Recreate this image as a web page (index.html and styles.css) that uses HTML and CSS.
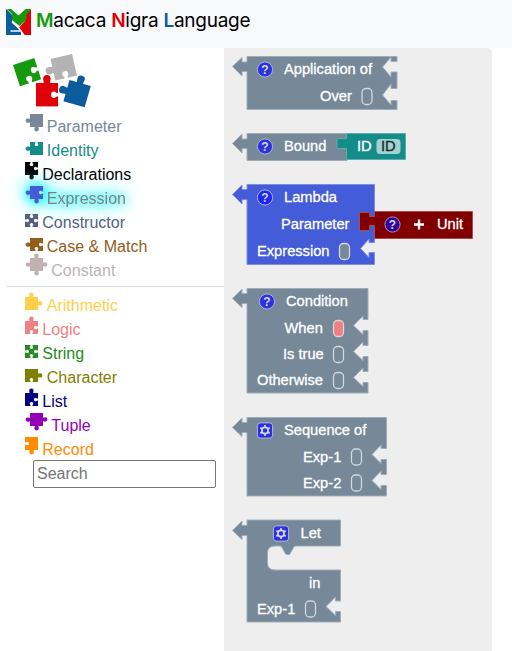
FILE: index.html
```html
<!DOCTYPE html>
<html lang="en">
<head>
<meta charset="utf-8">
<title>Macaca Nigra Language</title>
<link rel="stylesheet" href="styles.css">
</head>
<body>
<svg class="defs" aria-hidden="true">
  <defs>
    <path id="knob" d="M4.500 .5V-.5C4.500-1.100 4.200-1.300 4.200-2.400A2.200 2 0 0 1 8.600-2.400C8.600-1.300 8.300-1.100 8.300-.5V.5Z"/>
    <path id="hole" d="M5.500-.3V.7C5.500 1.300 4.700 1.500 4.700 2.400A1.800 1.700 0 0 0 8.300 2.400C8.300 1.500 7.500 1.300 7.500.7V-.3Z"/>
    <g id="help"><circle r="7.6"/><text y="4.2" text-anchor="middle">?</text></g>
    <g id="gear"><rect x="-7.6" y="-7.6" width="15.2" height="15.2" rx="3"/><circle r="3.1"/><path d="M0-5.400V-3.500M0 3.500V5.400M-4.700-2.700L-3-1.700M3 1.700L4.700 2.700M-4.700 2.700L-3 1.700M3-1.700L4.700-2.700"/></g>
    <rect id="slot" x="-5" y="-8" width="10" height="16" rx="4"/>
  </defs>
</svg>
<header class="topbar">
  <svg class="logo" viewBox="0 0 25 26">
    <path fill="#0a5c9c" d="M0 0L6 6V13.500L15 22.500V26H0Z"/>
    <path fill="#e00007" d="M25 0V26H18.500L13 18.500L19 12V6.500Z"/>
    <path fill="#149a0c" d="M5 0L12.500 6.500L19.500 0H25L20.500 6L20 11L13.500 17L6 11V5L1 0Z"/>
    <path fill="#0a5c9c" d="M0 0L6 6V14H0Z"/>
    <path stroke="#f8f9fb" stroke-width="1.500" fill="none" d="M6 13L12 18L18 26.500M4.500 22H14"/>
  </svg>
  <h1><b class="m">M</b>acaca <b class="n">N</b>igra <b class="l">L</b>anguage</h1>
</header>
<main>
  <aside>
    <svg class="pieces" viewBox="0 0 80 56">
      <g fill="#149a0c" transform="translate(0 11) rotate(-18) scale(1.720)"><rect width="13" height="13"/><use href="#hole" fill="#fff" transform="translate(13 0) rotate(90)"/><use href="#hole" fill="#fff" transform="translate(13 13) rotate(180)"/></g>
      <g fill="#b3b3b3" transform="translate(37.500 5) rotate(-13) scale(1.700)"><rect width="13" height="13"/><use href="#knob" transform="translate(0 13) rotate(-90)"/><use href="#hole" fill="#fff" transform="translate(13 13) rotate(180)"/></g>
      <g fill="#e00007" transform="translate(23 29) scale(1.700 1.800)"><rect width="13" height="13"/><use href="#knob"/><use href="#hole" fill="#fff" transform="translate(13 0) rotate(90)"/></g>
      <g fill="#0a5c9c" transform="translate(56.500 26) rotate(16) scale(1.700)"><rect width="13" height="13"/><use href="#knob"/><use href="#knob" transform="translate(0 13) rotate(-90)"/></g>
    </svg>
    <nav id="categories"></nav>
    <input type="text" placeholder="Search">
  </aside>
  <section class="flyout">
    <svg viewBox="224 48 268 603" width="268" height="603">
      <g class="block gray">
        <path d="M247 56.500H397V61.500H391V57L382.500 67L391 77V72H397V88.500H391V84L382.500 95L391 105V100.500H397V109.500H247V71.500H242V76L232.500 66.500L242 57.500V62H247Z"/>
        <use href="#help" class="icon" x="265" y="69.500"/>
        <text x="284" y="74.500">Application of</text><text x="320" y="101.500">Over</text>
        <use href="#slot" class="slot" x="367" y="96.500"/>
      </g>
      <g class="block gray">
        <path d="M247 133.500H347V160.500H247V148.500H242V153L232.500 143.500L242 134V139H247Z"/>
        <use href="#help" class="icon" x="265" y="146.500"/><text x="284" y="151.500">Bound</text>
      </g>
      <g class="block teal">
        <path d="M346.500 133.500H405.500V159.500H346.500V148.500H337V138.500H346.500Z"/>
        <text x="357" y="151.500">ID</text><rect class="field" x="376.500" y="139" width="24" height="15" rx="3.500"/><text class="dark" x="381" y="151.500">ID</text>
      </g>
      <g class="block blue">
        <path d="M247 184.500H374.500V242.500H369V239L360.500 248.500L369 257.500V252.500H374.500V264.500H247V199.500H242V204L232.500 194.500L242 185V189.500H247Z"/>
        <use href="#help" class="icon bright" x="265" y="197.500"/>
        <text x="284" y="202.500">Lambda</text><text x="281" y="229.500">Parameter</text><text x="257" y="256.500">Expression</text>
        <use href="#slot" class="slot filled" x="344.500" y="251.500"/>
      </g>
      <g class="block maroon">
        <path d="M374.500 211.500H472.500V238.500H374.500V225.500H369.500V230.500H359.500V212.500H369.500V216.500H374.500Z"/>
        <use href="#help" class="icon violet" x="392.500" y="224.500"/><path class="plus" d="M414 224.500H424M419 219.500V229.500"/><text x="437" y="229.500">Unit</text>
      </g>
      <g class="block gray">
        <path d="M247 288.500H368V319.500H363V316L353.500 325.500L363 334.500V330.500H368V345.500H363V342L353.500 351.500L363 360.500V356.500H368V371.500H363V368L353.500 377.500L363 386.500V382.500H368V393H247V303.500H242V307.500L232.500 298.500L242 289V293.500H247Z"/>
        <use href="#help" class="icon" x="267" y="301.500"/>
        <text x="286" y="306.500">Condition</text><text x="284.500" y="333.500">When</text><text x="283" y="359.500">Is true</text><text x="257" y="385.500">Otherwise</text>
        <use href="#slot" class="slot pink" x="338.500" y="328.500"/><use href="#slot" class="slot" x="338.500" y="354.500"/><use href="#slot" class="slot" x="338.500" y="380.500"/>
      </g>
      <g class="block gray">
        <path d="M247 417.500H386.500V448.500H381V445L372 454.500L381 463.500V459.500H386.500V474.500H381V471L372 480.500L381 489.500V485.500H386.500V496H247V432.500H242V436.500L232.500 427.500L242 418V422.500H247Z"/>
        <use href="#gear" class="icon" x="265" y="430.500"/>
        <text x="284" y="435.500">Sequence of</text><text x="303" y="462.500">Exp-1</text><text x="303" y="488.500">Exp-2</text>
        <use href="#slot" class="slot" x="356.500" y="457"/><use href="#slot" class="slot" x="356.500" y="483"/>
      </g>
      <g class="block gray">
        <path d="M247 520H340.500V546H294.500L289.500 554.500H286L281 546H275Q267.500 546 267.500 553V563Q267.500 570 275 570H340.500V601H335.500V597L326 606.500L335.500 615.500V611.500H340.500V622H247V535.500H242V539.500L232.500 530.500L242 521V525.500H247Z"/>
        <use href="#gear" class="icon" x="281" y="533.500"/>
        <text x="300.500" y="538.500">Let</text><text x="309" y="588.500">in</text><text x="257" y="614.500">Exp-1</text>
        <use href="#slot" class="slot" x="310.500" y="609"/>
      </g>
    </svg>
  </section>
</main>
<script src="app.js"></script>
</body>
</html>
```
FILE: styles.css
```css
* { box-sizing: border-box; }
body { margin: 0; height: 651px; overflow: hidden; background: #fff; font-family: "Liberation Sans", Arial, sans-serif; }
.defs { position: absolute; width: 0; height: 0; }
.topbar { height: 48px; padding: 0 6px; display: flex; align-items: flex-start; background: #f8f9fb; }
.logo { width: 25px; height: 26px; margin-top: 9px; flex: none; }
h1 { margin: 8px 0 0 5px; font: 400 19px/25px Inter, sans-serif; letter-spacing: -.26px; white-space: nowrap; color: #000; }
h1 b { font-weight: 600; }
.m { color: #149a0c; }
.n { color: #e00007; }
.l { color: #0a5c9c; }
main { display: flex; height: 603px; }
aside { width: 224px; flex: none; padding-top: 6px; }
.pieces { display: block; width: 80px; height: 56px; margin: 0 0 5px 13px; overflow: visible; }
.row { height: 24px; margin-left: 25px; width: max-content; display: flex; align-items: flex-start; font-size: 16px; line-height: 24px; }
.row svg { width: 13px; height: 13px; overflow: visible; flex: none; margin: 3px 4.300px 0 0; }
.row.down svg { margin-top: -1px; }
.row.left svg { margin-left: 4.500px; }
.row.right svg { margin-right: 8.800px; }
.row.selected span { color: #808080; }
.row.selected { filter: drop-shadow(0 0 5px #00f5ff) drop-shadow(0 0 9px #00f5ff); }
hr { height: 1px; border: 0; margin: 3px 0 7px 6px; background: #ddd; }
input { display: block; width: 183px; height: 28px; margin: -2px 0 0 33px; padding: 1px 3px; border: 1px solid #767676; border-radius: 2px; background: #fff; font: 16px "Liberation Sans", sans-serif; }
input::placeholder { color: #757575; }
.flyout { width: 268px; background: #eee; border-top-right-radius: 5px; overflow: hidden; }
.flyout > svg { display: block; }
.block > path { stroke-width: 1; }
.gray > path { fill: #778899; stroke: #a0acb8; }
.teal > path { fill: #148c8a; stroke: #5aafad; }
.blue > path { fill: #455cd9; stroke: #7d8de4; }
.maroon > path { fill: #800000; stroke: #a64d4d; }
.block text { font-size: 14.670px; fill: #fff; stroke: #fff; stroke-width: .3px; }
.block > text { transform: translateY(-.6px); }
.block .dark { fill: #182827; stroke: #182827; }
.field { fill: #a1d1d0; }
.slot { fill: none; stroke: #d2d8de; stroke-width: 1.300; }
.slot.filled { fill: #778899; }
.slot.pink { fill: #f08080; }
.icon { fill: #2d33dc; stroke: #aeb5df; stroke-width: 1; }
.icon.bright { fill: #1f27f5; }
.icon.violet { fill: #320099; stroke: #b090b8; }
#help text { font-size: 12px; font-weight: 700; fill: #d5d9f0; stroke: none; }
#gear circle, #gear path { fill: none; stroke: #d5d9f0; stroke-width: 1.700; }
.block .plus { fill: none; stroke: #fff; stroke-width: 2.400; }
```
FILE: app.js
```js
// Each side is "k" (knob), "h" (hole) or "-" (flat), in the order top, right, bottom, left.
const categories = [
  ["Parameter", "#778899", "--kk"],
  ["Identity", "#148c8a", "h--k"],
  ["Declarations", "#000000", "hhk-"],
  ["Expression", "#455cd9", "-hkk"],
  ["Constructor", "#565d7e", "hhhh"],
  ["Case & Match", "#945d1c", "-hhk"],
  ["Constant", "#c1b1b3", "kkkk"],
  null,
  ["Arithmetic", "#fdd04b", "kk--"],
  ["Logic", "#f08080", "khh-"],
  ["String", "#228b22", "hhhh"],
  ["Character", "#808000", "-kh-"],
  ["List", "#000080", "khh-"],
  ["Tuple", "#9400b8", "-kkk"],
  ["Record", "#ff8c00", "--kh"],
];
const turns = ["", "translate(13 0) rotate(90)", "translate(13 13) rotate(180)", "translate(0 13) rotate(-90)"];
document.getElementById("categories").innerHTML = categories.map(c => {
  if (!c) return "<hr>";
  const [name, color, sides] = c;
  const cls = ["row"];
  if (sides[2] === "k") cls.push("down");
  if (sides[3] === "k") cls.push("left");
  if (sides[1] === "k") cls.push("right");
  if (name === "Expression") cls.push("selected");
  const parts = [...sides].map((s, i) => s === "-" ? "" :
    `<use href="#${s === "k" ? "knob" : "hole"}" ${s === "h" ? `fill="${name === "Expression" ? "#9ffaff" : "#fff"}"` : ""} transform="${turns[i]}"/>`).join("");
  return `<div class="${cls.join(" ")}" style="color:${color}"><svg viewBox="0 0 13 13" fill="${color}"><rect width="13" height="13"/>${parts}</svg><span>${name.replace("&", "&amp;")}</span></div>`;
}).join("");
```
